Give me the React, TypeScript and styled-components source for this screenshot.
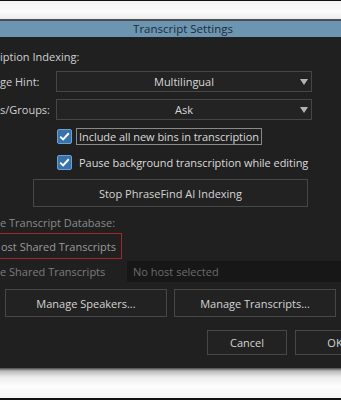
import React from 'react';
import styled, { createGlobalStyle } from 'styled-components';

const GlobalStyle = createGlobalStyle`
    html, body {
        margin: 0;
        padding: 0;
        background: #ffffff;
        overflow: hidden;
    }
    body {
        font-family: 'Open Sans', 'DejaVu Sans', sans-serif;
        font-size: 11px;
    }
`;

const Page = styled.div`
    width: 341px;
    height: 400px;
    display: flex;
    flex-direction: column;
    overflow: hidden;
`;

const TopStrip = styled.div`
    height: 18px;
    border-top: 1px solid #111;
    background: linear-gradient(#f3f3f3, #fbfbfb 60%, #ececec);
`;

const Dialog = styled.div`
    display: flex;
    flex-direction: column;
    border-top: 2px solid #4d4f52;
    background: #202020;
`;

const TitleBar = styled.div`
    height: 16px;
    padding-left: 25px;
    background: #6c95b2;
    color: #1d2b37;
    font-size: 11.5px;
    line-height: 16px;
    text-align: center;
`;

const Body = styled.div`
    display: flex;
    flex-direction: column;
    padding-bottom: 13px;
    color: #d2d2d2;
`;

const Heading = styled.div<{ $dim?: boolean; $top: number }>`
    margin-top: ${({ $top }) => $top}px;
    line-height: 14px;
    height: 14px;
    white-space: nowrap;
    color: ${({ $dim }) => ($dim ? '#8a8a8a' : '#d0d0d0')};
`;

const FieldRow = styled.div<{ $top: number }>`
    margin-top: ${({ $top }) => $top}px;
    display: flex;
    align-items: center;
    height: 21px;
`;

const FieldLabel = styled.div`
    width: 56px;
    white-space: nowrap;
    color: #d0d0d0;
`;

const Select = styled.div`
    position: relative;
    width: 256px;
    height: 21px;
    box-sizing: border-box;
    border: 1px solid #464646;
    background: #232323;
    color: #d8d8d8;
    line-height: 19px;
    text-align: center;
`;

const Arrow = styled.svg`
    position: absolute;
    right: 3px;
    top: 7px;
`;

const CheckRow = styled.div<{ $top: number }>`
    margin-top: ${({ $top }) => $top}px;
    margin-left: 57px;
    display: flex;
    align-items: center;
    gap: 4px;
    height: 17px;
`;

const Box = styled.div`
    width: 15px;
    height: 15px;
    box-sizing: border-box;
    border-radius: 2px;
    border: 1px solid #6f9fcc;
    background: #3772ad;
    display: flex;
    align-items: center;
    justify-content: center;
`;

const CheckLabel = styled.div<{ $focused?: boolean }>`
    height: 17px;
    box-sizing: border-box;
    padding: 0 2px;
    border: 1px solid ${({ $focused }) => ($focused ? '#8a8a8a' : 'transparent')};
    line-height: 15px;
    white-space: nowrap;
    letter-spacing: -0.05px;
    color: #dadada;
`;

const Button = styled.div<{ $w: number; $h: number }>`
    width: ${({ $w }) => $w}px;
    height: ${({ $h }) => $h}px;
    flex: none;
    box-sizing: border-box;
    border: 1px solid #474747;
    background: #222222;
    color: #d4d4d4;
    display: flex;
    align-items: center;
    justify-content: center;
    white-space: nowrap;
`;

const StopWrap = styled.div`
    margin-top: 8px;
    margin-left: 33px;
`;

const HostBox = styled.div`
    margin-top: 3px;
    margin-left: -2px;
    width: 124px;
    height: 26px;
    box-sizing: border-box;
    border: 1px solid #a3272a;
    padding-left: 2px;
    display: flex;
    align-items: center;
    white-space: nowrap;
    color: #9a9a9a;
`;

const SharedRow = styled.div`
    margin-top: 2px;
    display: flex;
    align-items: center;
    height: 21px;
`;

const SharedLabel = styled.div`
    width: 127px;
    white-space: nowrap;
    color: #7c7c7c;
`;

const HostField = styled.div`
    flex: 1;
    height: 21px;
    background: #171717;
    color: #6c6c6c;
    line-height: 21px;
    padding-left: 6px;
    white-space: nowrap;
`;

const ButtonRow = styled.div<{ $top: number; $left: number; $gap: number }>`
    margin-top: ${({ $top }) => $top}px;
    margin-left: ${({ $left }) => $left}px;
    display: flex;
    gap: ${({ $gap }) => $gap}px;
`;

const BottomStrip = styled.div`
    flex: 1;
    border-bottom: 2px solid #111;
    background: linear-gradient(#4a4a4a, #b9b9b9 3px, #ececec 9px, #fdfdfd 60%, #f6f6f6);
`;

const Check = () => (
    <svg width="11" height="9" viewBox="0 0 11 9">
        <path d="M1.2 4.6 L4.1 7.4 L9.8 1.3" fill="none" stroke="#ffffff" strokeWidth="2" />
    </svg>
);

const DropArrow = () => (
    <Arrow width="8" height="6" viewBox="0 0 8 6">
        <path d="M0 0 H8 L4 6 Z" fill="#b4b4b4" />
    </Arrow>
);

export default function App() {
    return (
        <Page>
            <GlobalStyle />
            <TopStrip />
            <Dialog>
                <TitleBar>Transcript Settings</TitleBar>
                <Body>
                    <Heading $top={13}>iption Indexing:</Heading>
                    <FieldRow $top={7}>
                        <FieldLabel>ge Hint:</FieldLabel>
                        <Select>
                            Multilingual
                            <DropArrow />
                        </Select>
                    </FieldRow>
                    <FieldRow $top={7}>
                        <FieldLabel>s/Groups:</FieldLabel>
                        <Select>
                            Ask
                            <DropArrow />
                        </Select>
                    </FieldRow>
                    <CheckRow $top={8}>
                        <Box>
                            <Check />
                        </Box>
                        <CheckLabel $focused>Include all new bins in transcription</CheckLabel>
                    </CheckRow>
                    <CheckRow $top={9}>
                        <Box>
                            <Check />
                        </Box>
                        <CheckLabel>Pause background transcription while editing</CheckLabel>
                    </CheckRow>
                    <StopWrap>
                        <Button $w={275} $h={28}>Stop PhraseFind AI Indexing</Button>
                    </StopWrap>
                    <Heading $top={9} $dim>e Transcript Database:</Heading>
                    <HostBox>ost Shared Transcripts</HostBox>
                    <SharedRow>
                        <SharedLabel>e Shared Transcripts</SharedLabel>
                        <HostField>No host selected</HostField>
                    </SharedRow>
                    <ButtonRow $top={7} $left={5} $gap={7}>
                        <Button $w={162} $h={28}>Manage Speakers...</Button>
                        <Button $w={162} $h={28}>Manage Transcripts...</Button>
                    </ButtonRow>
                    <ButtonRow $top={13} $left={207} $gap={8}>
                        <Button $w={80} $h={25}>Cancel</Button>
                        <Button $w={80} $h={25}>OK</Button>
                    </ButtonRow>
                </Body>
            </Dialog>
            <BottomStrip />
        </Page>
    );
}
